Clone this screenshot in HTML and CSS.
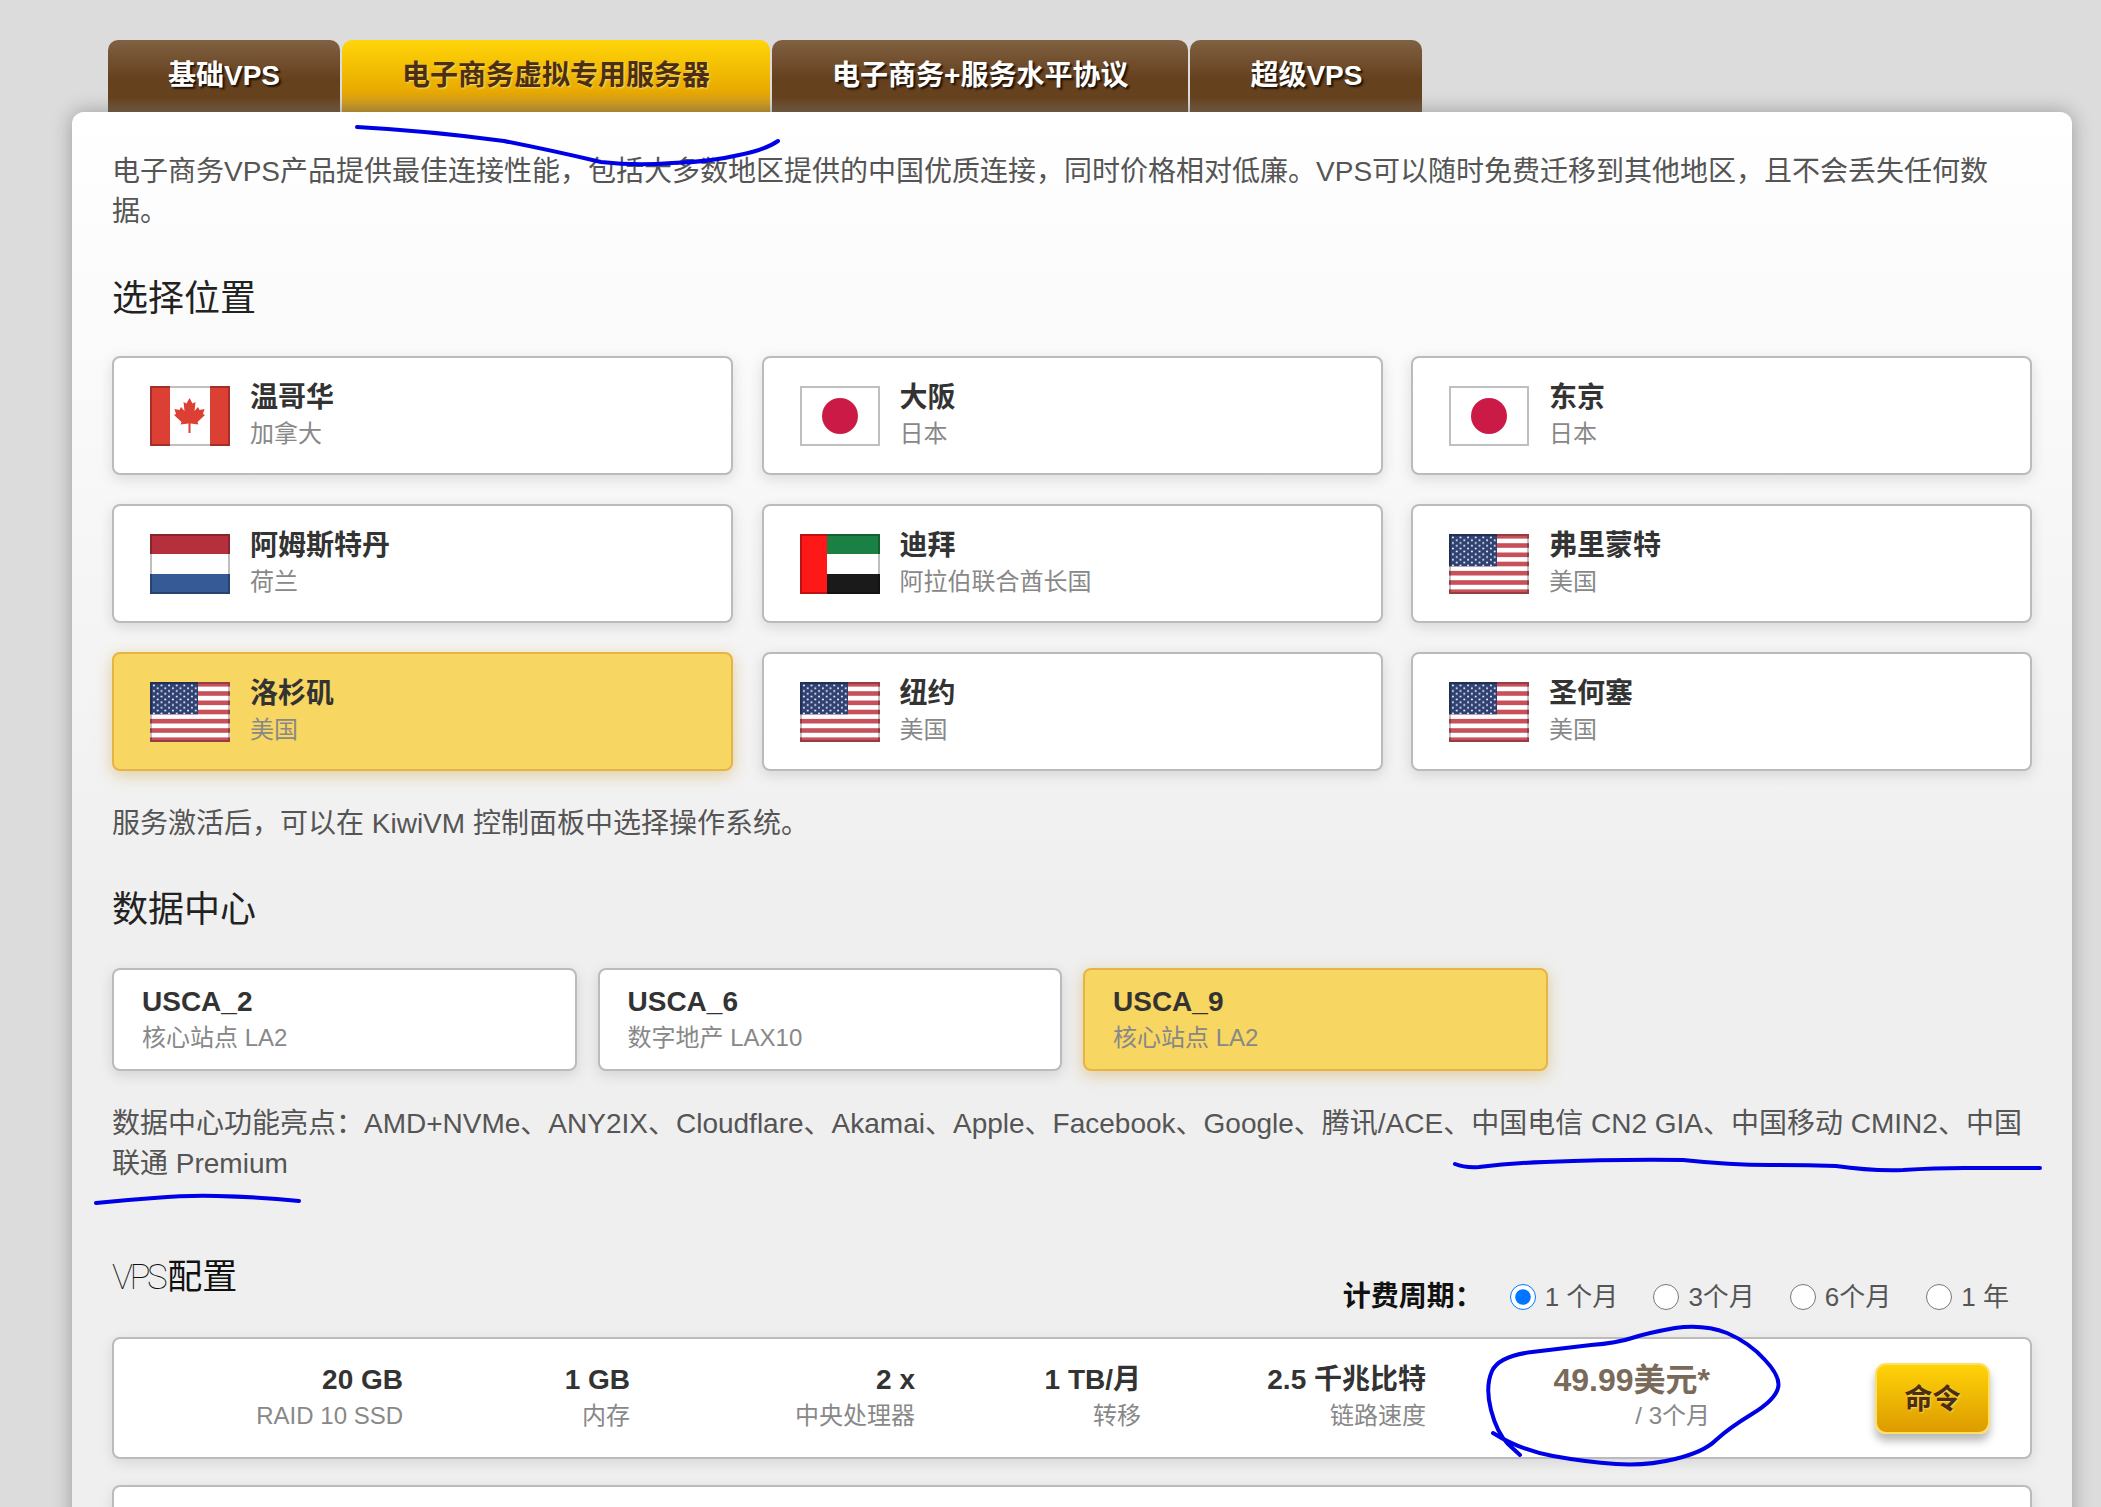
FILE: index.html
```html
<!DOCTYPE html>
<html lang="zh-CN">
    <head>
        <meta charset="UTF-8">
        <meta name="viewport" content="width=device-width, initial-scale=1.0">
        <title>电子商务VPS</title>
        <link rel="stylesheet" href="styles.css">
    </head>
    <body>
        <svg class="flag-defs" width="0" height="0">
            <defs>
                <pattern id="stars" width="7.6" height="5.6" patternUnits="userSpaceOnUse" x="2" y="2">
                    <circle cx="1.9" cy="1.4" r="1" fill="#fff"></circle>
                    <circle cx="5.7" cy="4.2" r="1" fill="#fff"></circle>
                </pattern>
                <symbol id="flag-ca" viewBox="0 0 80 60">
                    <rect width="80" height="60" fill="#fff"></rect>
                    <rect width="20" height="60" fill="#dc3f33"></rect>
                    <rect x="60" width="20" height="60" fill="#dc3f33"></rect>
                    <polygon fill="#dc3f33" points="39.5,12 42.5,17.5 45.5,16 44.5,25 48,21 49.5,24 54.5,23 53,28 55,29 47.5,36 48.5,38.5 40.5,37.5 40.5,47 38.5,47 38.5,37.5 30.5,38.5 31.5,36 24,29 26,28 24.5,23 29.5,24 31,21 34.5,25 33.5,16 36.5,17.5"></polygon>
                    <rect x="1" y="1" width="78" height="58" fill="none" stroke="#000" stroke-opacity=".25" stroke-width="2"></rect>
                </symbol>
                <symbol id="flag-jp" viewBox="0 0 80 60">
                    <rect width="80" height="60" fill="#fff"></rect>
                    <circle cx="40" cy="30" r="18" fill="#cb1a45"></circle>
                    <rect x="1" y="1" width="78" height="58" fill="none" stroke="#000" stroke-opacity=".25" stroke-width="2"></rect>
                </symbol>
                <symbol id="flag-nl" viewBox="0 0 80 60">
                    <rect width="80" height="60" fill="#fff"></rect>
                    <rect width="80" height="20" fill="#b5303c"></rect>
                    <rect y="40" width="80" height="20" fill="#365a96"></rect>
                    <rect x="1" y="1" width="78" height="58" fill="none" stroke="#000" stroke-opacity=".25" stroke-width="2"></rect>
                </symbol>
                <symbol id="flag-ae" viewBox="0 0 80 60">
                    <rect width="80" height="60" fill="#fff"></rect>
                    <rect x="27" width="53" height="20" fill="#1b8043"></rect>
                    <rect x="27" y="40" width="53" height="20" fill="#1a1a1a"></rect>
                    <rect width="27" height="60" fill="#ff1818"></rect>
                    <rect x="1" y="1" width="78" height="58" fill="none" stroke="#000" stroke-opacity=".25" stroke-width="2"></rect>
                </symbol>
                <symbol id="flag-us" viewBox="0 0 80 60">
                    <rect width="80" height="60" fill="#fff"></rect>
                    <g fill="#c8505a">
                        <rect width="80" height="4.6"></rect>
                        <rect y="9.2" width="80" height="4.6"></rect>
                        <rect y="18.5" width="80" height="4.6"></rect>
                        <rect y="27.7" width="80" height="4.6"></rect>
                        <rect y="36.9" width="80" height="4.6"></rect>
                        <rect y="46.2" width="80" height="4.6"></rect>
                        <rect y="55.4" width="80" height="4.6"></rect>
                    </g>
                    <rect width="48" height="32.3" fill="#2f4172"></rect>
                    <rect x="2" y="2" width="46" height="30.3" fill="url(#stars)"></rect>
                    <rect x="1" y="1" width="78" height="58" fill="none" stroke="#000" stroke-opacity=".25" stroke-width="2"></rect>
                </symbol>
            </defs>
        </svg>

        <div class="page">
            <div class="tabs">
                <a class="tab">基础VPS</a>
                <a class="tab active">电子商务虚拟专用服务器</a>
                <a class="tab">电子商务+服务水平协议</a>
                <a class="tab">超级VPS</a>
            </div>

            <div class="panel">
                <p class="intro">电子商务VPS产品提供最佳连接性能，包括大多数地区提供的中国优质连接，同时价格相对低廉。VPS可以随时免费迁移到其他地区，且不会丢失任何数据。</p>

                <h2 class="section-title">选择位置</h2>
                <div class="location-grid">
                    <div class="option">
                        <svg class="flag"><use href="#flag-ca"></use></svg>
                        <div><div class="option-name">温哥华</div><div class="option-sub">加拿大</div></div>
                    </div>
                    <div class="option">
                        <svg class="flag"><use href="#flag-jp"></use></svg>
                        <div><div class="option-name">大阪</div><div class="option-sub">日本</div></div>
                    </div>
                    <div class="option">
                        <svg class="flag"><use href="#flag-jp"></use></svg>
                        <div><div class="option-name">东京</div><div class="option-sub">日本</div></div>
                    </div>
                    <div class="option">
                        <svg class="flag"><use href="#flag-nl"></use></svg>
                        <div><div class="option-name">阿姆斯特丹</div><div class="option-sub">荷兰</div></div>
                    </div>
                    <div class="option">
                        <svg class="flag"><use href="#flag-ae"></use></svg>
                        <div><div class="option-name">迪拜</div><div class="option-sub">阿拉伯联合酋长国</div></div>
                    </div>
                    <div class="option">
                        <svg class="flag"><use href="#flag-us"></use></svg>
                        <div><div class="option-name">弗里蒙特</div><div class="option-sub">美国</div></div>
                    </div>
                    <div class="option selected">
                        <svg class="flag"><use href="#flag-us"></use></svg>
                        <div><div class="option-name">洛杉矶</div><div class="option-sub">美国</div></div>
                    </div>
                    <div class="option">
                        <svg class="flag"><use href="#flag-us"></use></svg>
                        <div><div class="option-name">纽约</div><div class="option-sub">美国</div></div>
                    </div>
                    <div class="option">
                        <svg class="flag"><use href="#flag-us"></use></svg>
                        <div><div class="option-name">圣何塞</div><div class="option-sub">美国</div></div>
                    </div>
                </div>
                <p class="note">服务激活后，可以在 KiwiVM 控制面板中选择操作系统。</p>

                <h2 class="section-title dc-title">数据中心</h2>
                <div class="dc-row">
                    <div class="option dc">
                        <div><div class="option-name">USCA_2</div><div class="option-sub">核心站点 LA2</div></div>
                    </div>
                    <div class="option dc">
                        <div><div class="option-name">USCA_6</div><div class="option-sub">数字地产 LAX10</div></div>
                    </div>
                    <div class="option dc selected">
                        <div><div class="option-name">USCA_9</div><div class="option-sub">核心站点 LA2</div></div>
                    </div>
                </div>
                <p class="note">数据中心功能亮点：AMD+NVMe、ANY2IX、Cloudflare、Akamai、Apple、Facebook、Google、腾讯/ACE、中国电信 CN2 GIA、中国移动 CMIN2、中国联通 Premium</p>

                <div class="config-head">
                    <h2 class="section-title config-title"><span class="latin-thin">VPS</span>配置</h2>
                    <div class="billing">
                        <strong class="billing-label">计费周期：</strong>
                        <label class="billing-option"><input type="radio" name="cycle" checked>1 个月</label>
                        <label class="billing-option"><input type="radio" name="cycle">3个月</label>
                        <label class="billing-option"><input type="radio" name="cycle">6个月</label>
                        <label class="billing-option"><input type="radio" name="cycle">1 年</label>
                    </div>
                </div>

                <div class="plan">
                    <div class="spec"><div class="option-name">20 GB</div><div class="option-sub">RAID 10 SSD</div></div>
                    <div class="spec"><div class="option-name">1 GB</div><div class="option-sub">内存</div></div>
                    <div class="spec"><div class="option-name">2 x</div><div class="option-sub">中央处理器</div></div>
                    <div class="spec"><div class="option-name">1 TB/月</div><div class="option-sub">转移</div></div>
                    <div class="spec"><div class="option-name">2.5 千兆比特</div><div class="option-sub">链路速度</div></div>
                    <div class="spec"><div class="price">49.99美元*</div><div class="option-sub">/ 3个月</div></div>
                    <a class="order-btn">命令</a>
                </div>
                <div class="plan"></div>
            </div>
        </div>

        <!-- pen marks drawn on top of the screenshot -->
        <svg class="pen-marks" width="2101" height="1507" viewBox="0 0 2101 1507">
            <path d="M357 127 Q430 131 504 141 Q550 150 601 162 Q636 166 672 163 Q710 162 739 155 Q765 150 778 141"></path>
            <path d="M1455 1164 Q1465 1168 1479 1167 Q1510 1163 1545 1162 Q1620 1159 1683 1160 Q1730 1165 1770 1165 Q1805 1165 1836 1166 Q1870 1171 1903 1170 Q1935 1168 1964 1168 L2040 1168"></path>
            <path d="M96 1203 Q125 1200 154 1198 Q190 1195 217 1196 Q260 1197 299 1201"></path>
            <path d="M1493 1433 Q1520 1450 1553 1456 Q1586 1462 1616 1464 Q1647 1466 1675 1459 Q1704 1452 1716 1440 Q1729 1428 1752 1414 Q1775 1400 1778 1388 Q1781 1377 1765 1360 Q1750 1343 1727 1333 Q1704 1324 1675 1328 Q1647 1333 1632 1338 Q1617 1343 1591 1345 Q1566 1348 1532 1352 Q1499 1356 1492 1371 Q1485 1387 1491 1410 Q1497 1433 1508 1444 L1520 1455"></path>
        </svg>
    </body>
</html>
```

FILE: styles.css
```css
html, body {
    height: 100%;
}
body {
    position: relative;
    margin: 0;
    overflow: hidden;
    background-color: #dcdcdc;
    color: #555;
    font-family: "Liberation Sans", "Noto Sans CJK SC", sans-serif;
    font-size: 28px;
    line-height: 40px;
}
.flag-defs {
    display: block;
    height: 0;
}
.page {
    width: 2000px;
    margin-left: 72px;
    padding-top: 40px;
}
.tabs {
    display: flex;
    gap: 2px;
    padding-left: 36px;
}
.tab {
    height: 72px;
    padding: 0 60px;
    border-radius: 10px 10px 0 0;
    background: linear-gradient(#806142, #65401d 55%, #67431f 80%, #7d6449);
    color: #fff;
    font-size: 28px;
    font-weight: bold;
    line-height: 72px;
    text-shadow: 2px 2px 2px rgba(0, 0, 0, 0.75);
}
.tab.active {
    background: linear-gradient(#ffd508, #e8a900 72%, #c39a3c);
    color: #4b2e13;
    text-shadow: 1px 1px 2px rgba(255, 240, 150, 0.7);
}
.panel {
    position: relative;
    height: 1500px;
    padding: 40px 40px 0 40px;
    box-sizing: border-box;
    border-radius: 12px 12px 0 0;
    background: linear-gradient(#fff, #efefef 800px);
    box-shadow: 0 0 20px rgba(0, 0, 0, 0.3);
}
.intro, .note {
    margin: 0;
}
.section-title {
    margin: 42px 0 32px;
    color: #222;
    font-size: 36px;
    font-weight: 400;
    line-height: 50px;
}
.location-grid {
    display: grid;
    grid-template-columns: repeat(3, 621px);
    grid-auto-rows: 119px;
    gap: 29px 28.5px;
}
.option {
    display: flex;
    align-items: center;
    box-sizing: border-box;
    padding-left: 36px;
    border: 2px solid #bbb;
    border-radius: 8px;
    background-color: #fff;
    box-shadow: 0 4px 14px rgba(0, 0, 0, 0.12);
}
.option.selected {
    border-color: #e6b445;
    background-color: #f8d662;
    box-shadow: 0 4px 16px rgba(200, 150, 30, 0.4);
}
.flag {
    flex: none;
    width: 80px;
    height: 60px;
    margin-right: 20px;
}
.option-name {
    color: #333;
    font-size: 28px;
    font-weight: bold;
    line-height: 36px;
}
.option-sub {
    color: #888;
    font-size: 24px;
    line-height: 36px;
}
.location-grid + .note {
    margin-top: 33px;
}
.dc-title {
    margin: 41px 0 33px;
}
.dc-row {
    display: flex;
    gap: 21px;
    margin-bottom: 33px;
}
.option.dc {
    width: 464.5px;
    height: 103px;
    padding-left: 28px;
}
.config-head {
    display: flex;
    justify-content: space-between;
    align-items: flex-end;
    height: 83px;
    margin: 54px 0 16px;
}
.config-title {
    margin: 0 0 18px;
    color: #111;
    font-size: 35px;
}
.latin-thin {
    font-family: Roboto, sans-serif;
    font-weight: 100;
    letter-spacing: -3.5px;
    margin-right: 3px;
}
.billing {
    display: flex;
    align-items: center;
    height: 40px;
    margin-bottom: 4px;
    padding-right: 23px;
    font-size: 26px;
}
.billing-label {
    width: 167px;
    color: #111;
    font-size: 28px;
}
.billing-option {
    display: flex;
    align-items: center;
    gap: 9px;
    margin-right: 35px;
}
.billing-option:last-child {
    margin-right: 0;
}
.billing-option input {
    width: 26px;
    height: 26px;
    margin: 0;
}
.plan {
    display: grid;
    grid-template-columns: 289px 227px 285px 226px 285px 284px 1fr;
    align-items: center;
    box-sizing: border-box;
    width: 1920px;
    height: 122px;
    margin-bottom: 26px;
    border: 2px solid #bbb;
    border-radius: 8px;
    background-color: #fff;
    box-shadow: 0 4px 14px rgba(0, 0, 0, 0.1);
}
.spec {
    text-align: right;
}
.price {
    color: #7a6a5a;
    font-size: 32px;
    font-weight: bold;
    line-height: 36px;
}
.order-btn {
    justify-self: end;
    box-sizing: border-box;
    width: 115px;
    height: 71px;
    margin-right: 40px;
    border: 2px solid #ffdf60;
    border-radius: 11px;
    background: linear-gradient(#ffd308, #dd9b00);
    box-shadow: 0 7px 8px rgba(0, 0, 0, 0.28);
    color: #4b2e13;
    font-size: 28px;
    font-weight: bold;
    line-height: 70px;
    text-align: center;
    text-shadow: 1px 1px 2px rgba(255, 240, 150, 0.6);
}
.pen-marks {
    position: absolute;
    top: 0;
    left: 0;
    pointer-events: none;
}
.pen-marks path {
    fill: none;
    stroke: #0000e6;
    stroke-width: 4;
    stroke-linecap: round;
    stroke-linejoin: round;
}
```
